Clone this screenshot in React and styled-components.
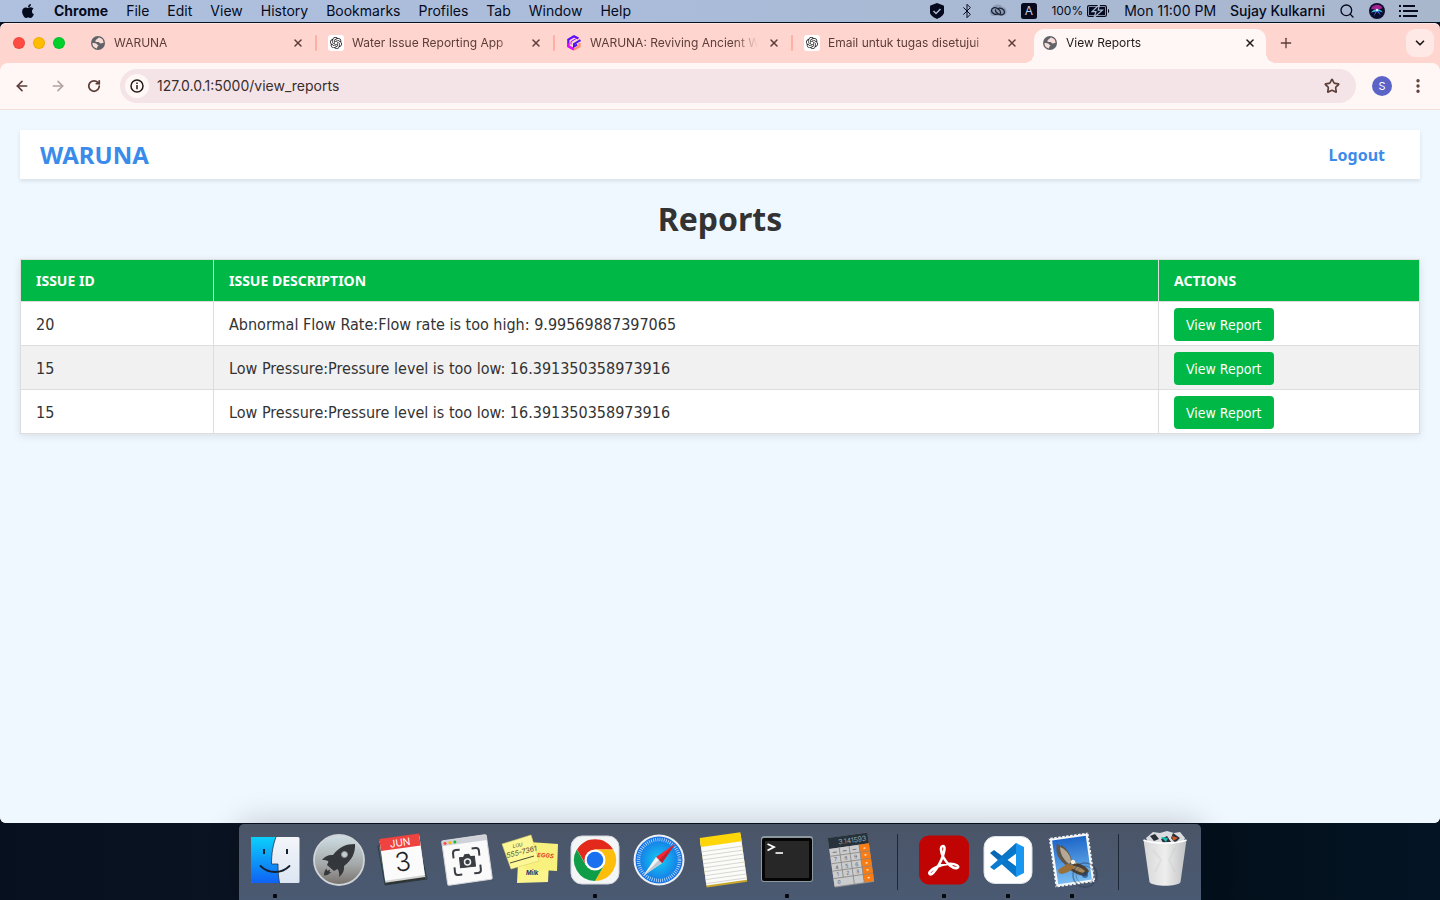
import React from "react";
import styled, { createGlobalStyle, css } from "styled-components";
import { FaApple } from "react-icons/fa";
import { SiOpenai } from "react-icons/si";
import {
  ArrowLeft,
  ArrowRight,
  Bluetooth,
  ChevronDown,
  EllipsisVertical,
  Plus,
  RotateCw,
  Search,
  Star,
  X,
} from "lucide-react";

const SYSTEM_FONT = `Inter, "Liberation Sans", sans-serif`;
const PAGE_FONT = `"DejaVu Sans Condensed", "DejaVu Sans", "Noto Sans", sans-serif`;
const HEADING_FONT = `"Noto Sans", "DejaVu Sans", sans-serif`;
const DRAWING_FONT = `Inter, sans-serif`;

const GlobalStyle = createGlobalStyle`
  *, *::before, *::after { box-sizing: border-box; }
  body { margin: 0; font-family: ${SYSTEM_FONT}; }
  button, input { font: inherit; }
`;

/* ---------- Desktop ---------- */

const Desktop = styled.div`
  min-height: 100vh;
  display: flex;
  flex-direction: column;
  background: linear-gradient(90deg, #07101f, #0a1322 15%, #03101c 85%, #041424);
  overflow: hidden;
`;

const MenuBar = styled.header`
  height: 22px;
  flex: none;
  margin-bottom: 1px;
  padding: 0 22px 0 20px;
  display: flex;
  align-items: center;
  justify-content: space-between;
  background: linear-gradient(90deg, #b0c1df, #a9bbd8 50%, #a9b7cd);
  color: #050a1c;
  font-size: 14px;
  line-height: 22px;
  white-space: nowrap;
`;

const MenuList = styled.nav`
  display: flex;
  align-items: center;
  gap: 18px;
`;

const MenuButton = styled.button`
  padding: 0;
  border: 0;
  background: none;
  color: inherit;
  display: flex;
  align-items: center;
  font-size: 14px;
  line-height: 22px;
  font-weight: ${(p) => p.$weight || 400};
`;

const StatusList = styled.div`
  display: flex;
  align-items: center;
  gap: 14px;
`;

const Battery = styled.span`
  display: flex;
  align-items: center;
  gap: 4px;
  font-size: 12px;
`;

/* ---------- Browser window ---------- */

const Window = styled.main`
  flex: 1;
  display: flex;
  flex-direction: column;
  margin-bottom: 1px;
  border-radius: 6px;
  overflow: hidden;
  background: #ffd5d0;
  box-shadow: inset 0 1px 0 #ffe6e2;
`;

const TabStrip = styled.div`
  height: 40px;
  flex: none;
  display: flex;
  align-items: center;
  padding-right: 6px;
`;

const TrafficLights = styled.div`
  width: 79px;
  flex: none;
  display: flex;
  gap: 8px;
  padding-left: 13px;
`;

const Light = styled.button`
  width: 12px;
  height: 12px;
  padding: 0;
  border: 1px solid rgba(0, 0, 0, 0.08);
  border-radius: 50%;
  background: ${(p) => p.$color};
`;

const Tab = styled.div`
  flex: 0 1 238px;
  min-width: 0;
  align-self: stretch;
  display: flex;
  align-items: center;
  gap: 1px;
  padding: 6px 0 0 3px;

  &::after {
    content: "";
    width: 2px;
    height: 16px;
    margin-bottom: 6px;
    border-radius: 1px;
    background: ${(p) => (p.$divider ? "#ffb0a6" : "transparent")};
  }
`;

const curve = css`
  content: "";
  position: absolute;
  bottom: 0;
  width: 10px;
  height: 10px;
`;

const TabBody = styled.div`
  position: relative;
  flex: 1;
  min-width: 0;
  height: 34px;
  display: flex;
  align-items: center;
  gap: 8px;
  padding: 0 8px 6px;
  border-radius: 10px 10px 0 0;
  color: #5c3d38;
  font-size: 12px;
  line-height: 16px;

  ${(p) =>
    p.$active &&
    css`
      background: #fff7f5;
      color: #1f1a19;
      &::before {
        ${curve}
        left: -10px;
        background: radial-gradient(circle at 0 0, transparent 10px, #fff7f5 10px);
      }
      &::after {
        ${curve}
        right: -10px;
        background: radial-gradient(circle at 100% 0, transparent 10px, #fff7f5 10px);
      }
    `}
`;

const TabIcon = styled.span`
  width: 16px;
  height: 16px;
  flex: none;
  display: flex;
  align-items: center;
  justify-content: center;
  border-radius: 3px;
  background: ${(p) => (p.$plate ? "#fff" : "transparent")};
`;

const TabTitle = styled.span`
  flex: 1;
  min-width: 0;
  white-space: nowrap;
  mask-image: linear-gradient(90deg, #000 calc(100% - 24px), transparent);
`;

const IconButton = styled.button`
  width: ${(p) => p.$size || 16}px;
  height: ${(p) => p.$size || 16}px;
  flex: none;
  display: flex;
  align-items: center;
  justify-content: center;
  padding: 0;
  border: 0;
  border-radius: ${(p) => p.$radius || 0}px;
  background: ${(p) => p.$fill || "none"};
  color: ${(p) => p.$color || "inherit"};
`;

const NewTab = styled.span`
  flex: 1;
  padding-left: 7px;
`;

const Toolbar = styled.div`
  height: 47px;
  flex: none;
  display: flex;
  align-items: center;
  padding: 0 8px;
  gap: 8px;
  background: #fff7f5;
  border-bottom: 1px solid #f3dedb;
  border-radius: 8px 8px 0 0;
`;

const Omnibox = styled.div`
  flex: 1;
  height: 34px;
  margin: 0 4px;
  padding: 0 14px 0 5px;
  display: flex;
  align-items: center;
  gap: 8px;
  border-radius: 17px;
  background: #f4e4e7;
`;

const UrlInput = styled.input`
  flex: 1;
  min-width: 0;
  padding: 0;
  border: 0;
  outline: 0;
  background: none;
  color: #3a2d2c;
  font-size: 14px;
  line-height: 20px;
`;

const Avatar = styled.button`
  width: 20px;
  height: 20px;
  margin: 0 4px;
  padding: 0;
  border: 0;
  border-radius: 50%;
  background: #5c63c6;
  color: #fff;
  font-size: 11px;
  line-height: 20px;
`;

/* ---------- Reports page ---------- */

const Page = styled.div`
  flex: 1;
  padding: 20px;
  background: #f0f8ff;
  color: #333;
  font-family: ${PAGE_FONT};
  font-size: 16px;
`;

const NavBar = styled.div`
  display: flex;
  align-items: center;
  justify-content: space-between;
  padding: 10px 20px;
  background: #fff;
  box-shadow: 0 2px 4px rgba(0, 0, 0, 0.1);
`;

const Brand = styled.div`
  color: #3b8beb;
  font-family: ${HEADING_FONT};
  font-size: 24px;
  line-height: 29px;
  font-weight: 700;
`;

const NavLink = styled.a`
  margin-right: 15px;
  color: #3b8beb;
  font-family: ${HEADING_FONT};
  font-size: 16px;
  line-height: 20px;
  font-weight: 700;
  text-decoration: none;
`;

const Title = styled.h1`
  margin: 20px 0;
  font-family: ${HEADING_FONT};
  font-size: 32px;
  line-height: 40px;
  font-weight: 700;
  text-align: center;
`;

const Table = styled.table`
  width: 100%;
  table-layout: fixed;
  border-collapse: collapse;
  background: #fff;
  box-shadow: 0 2px 8px rgba(0, 0, 0, 0.1);
`;

const Column = styled.col`
  width: ${(p) => p.$width};
`;

const HeadCell = styled.th`
  height: 42px;
  padding: 0 15px;
  border: 1px solid #ddd;
  background: #00b845;
  color: #fff;
  font-family: ${HEADING_FONT};
  font-size: 14px;
  line-height: 20px;
  font-weight: 700;
  text-align: left;
  text-transform: uppercase;
`;

const Row = styled.tr`
  &:nth-child(even) {
    background: #f1f1f1;
  }
`;

const Cell = styled.td`
  height: 44px;
  padding: 2px 15px 0;
  border: 1px solid #ddd;
  line-height: 20px;
`;

const ReportButton = styled.button`
  display: block;
  height: 33px;
  padding: 0 12px;
  border: 0;
  border-radius: 4px;
  background: #00b845;
  color: #fff;
  font-size: 14px;
  line-height: 20px;
  white-space: nowrap;
`;

/* ---------- Dock ---------- */

const Dock = styled.footer`
  position: relative;
  align-self: center;
  flex: none;
  display: flex;
  padding: 4px 4px 0;
  border-radius: 5px 5px 0 0;
  background: linear-gradient(#4b5568, #4a5a72);
  box-shadow: 0 0 32px rgba(0, 0, 0, 0.22);
`;

const DockItem = styled.button`
  width: 64px;
  height: 72px;
  padding: 0;
  border: 0;
  background: none;
  display: flex;
  flex-direction: column;
  align-items: center;
  gap: 2px;

  &::after {
    content: "";
    width: 4px;
    height: 4px;
    border-radius: 1px;
    background: ${(p) => (p.$running ? "#05070b" : "transparent")};
  }
`;

const DockDivider = styled.div`
  width: 1px;
  margin: 6px 14px 10px;
  background: #1c2738;
`;

/* ---------- Small icons ---------- */

const Globe = () => (
  <svg width="14" height="14" viewBox="0 0 14 14">
    <circle cx="7" cy="7" r="7" fill="#5f6368" />
    <path d="M8 1.4c-1.2.2-1 1.5-2 1.6-.9.2-.6 1.3-1.500 1.600C3.700 5 4.500 6 5.500 6h2c1 0 1 1.400 2 1.400 1.100 0 1.700-.6 3-.4A5.600 5.600 0 0 0 8 1.400z" fill="#f8dcd8" />
    <path d="M1.400 7C3 7 5.500 7 6 8.200c.3.800 1.400.5 1.400 1.400 0 .9-1.200.8-1.200 1.700 0 .5-.2.900-.2 1.200A5.600 5.600 0 0 1 1.400 7z" fill="#f8dcd8" />
  </svg>
);

const HexLogo = () => (
  <svg width="16" height="16" viewBox="0 0 16 16" fill="none">
    <path d="M12.500 3.400 8 1.300 2.300 4.600v6.600l5.700 3.200" stroke="#5a10ff" strokeWidth="2.200" />
    <path d="M2.300 8v3.200L8 14.500" stroke="#e40cff" strokeWidth="2.400" />
    <path d="m8 14.500 5.500-3.200V8" stroke="#ff8f70" strokeWidth="2.200" />
    <path d="M14.500 5.200 8 9v2.500l3.200-1.800" stroke="#4a12f5" strokeWidth="2" />
    <path d="M5 9.500V6.500l6-3.300" stroke="#a414fa" strokeWidth="1" />
  </svg>
);

const Favicon = ({ kind }) => {
  if (kind === "chat") {
    return (
      <TabIcon $plate>
        <SiOpenai size={12} color="#222" />
      </TabIcon>
    );
  }
  return <TabIcon>{kind === "hex" ? <HexLogo /> : <Globe />}</TabIcon>;
};

const ShieldIcon = () => (
  <svg width="16" height="16" viewBox="0 0 16 16">
    <path d="M8 0 14.500 2.400a1 1 0 0 1 .5 1v6.200c0 2.500-3.500 5-7 6.400-3.500-1.400-7-3.900-7-6.400V3.400a1 1 0 0 1 .5-1z" fill="#060a1c" />
    <path d="m4.500 8 2.500 2.500 4.500-4.500" stroke="#a9b9d4" strokeWidth="1.500" fill="none" />
  </svg>
);

const CloudIcon = () => (
  <svg width="18" height="14" viewBox="0 0 18 14" fill="none">
    <path d="M4 12a4 4 0 0 1-1-7.500A6 6 0 0 1 13.500 3 4.500 4.500 0 0 1 15 11.500z" fill="#8c9bb3" />
    <path d="M9.500 9.500C7 11.500 2.500 9.500 2.500 6.500 2.500 3.500 6 3 8.500 4.500s4 4 2.500 5.500" stroke="#1a2338" strokeWidth="1.300" />
    <path d="M8.500 5C11 3 15.500 5 15.500 8c0 3-3.500 3.500-6 2s-4-3.500-2.500-4.500" stroke="#1a2338" strokeWidth="1.300" />
  </svg>
);

const InputSourceIcon = () => (
  <svg width="16" height="16" viewBox="0 0 16 16">
    <rect width="16" height="16" rx="2.500" fill="#060a1c" />
    <text x="8" y="12" textAnchor="middle" fontSize="12" fontFamily={DRAWING_FONT} fill="#c5d0e2">A</text>
  </svg>
);

const BatteryIcon = () => (
  <svg width="23" height="12" viewBox="0 0 23 12" fill="none">
    <rect x=".6" y=".6" width="18.800" height="10.800" rx="1.500" stroke="#060a1c" strokeWidth="1.200" />
    <rect x="2" y="2" width="16" height="8" fill="#060a1c" />
    <path d="M12.500-.5 5 6.700h4l-2 5.800 8.500-7.400h-4.300z" fill="#060a1c" stroke="#aab9d2" strokeWidth="1.200" />
    <path d="M21 4v4c1.500-.4 1.500-3.600 0-4z" fill="#060a1c" />
  </svg>
);

const SiriIcon = () => (
  <svg width="16" height="16" viewBox="0 0 16 16">
    <circle cx="8" cy="8" r="8" fill="#0c0d2c" />
    <path d="M2 6a6.300 6.300 0 0 1 11.500-1L9 7z" fill="#a3228f" />
    <path d="M2 9.500C4 7 6 6 8 6.500c2.500-.5 4 .5 6 3L9.500 8z" fill="#3ac4e8" />
    <path d="m4.500 13.500 3.500-8 4 7-4-4z" fill="#3f7df0" />
    <circle cx="8" cy="7" r="1.200" fill="#e6f5ff" />
  </svg>
);

const ListIcon = () => (
  <svg width="19" height="12" viewBox="0 0 19 12" fill="#060a1c">
    <path d="M0 0h2v2H0zM4 0h12v2H4zM0 5h2v2H0zM4 5h15v2H4zM0 10h2v2H0zM4 10h14v2H4z" />
  </svg>
);

const InfoIcon = () => (
  <svg width="14" height="14" viewBox="0 0 14 14" fill="none">
    <circle cx="7" cy="7" r="6" stroke="#1f1a19" strokeWidth="1.500" />
    <path d="M7 6v4.200M7 3.500v1.500" stroke="#1f1a19" strokeWidth="1.500" />
  </svg>
);

/* ---------- Dock artwork (64 x 64) ---------- */

const Art = ({ children }) => (
  <svg width="64" height="64" viewBox="0 0 64 64" fill="none">{children}</svg>
);

const FinderArt = () => (
  <Art>
    <defs>
      <linearGradient id="fl" x2="0" y2="1"><stop stopColor="#0bd0fb" /><stop offset="1" stopColor="#0f62f5" /></linearGradient>
      <linearGradient id="fr" x2="0" y2="1"><stop stopColor="#f3f5f9" /><stop offset="1" stopColor="#dce6f3" /></linearGradient>
    </defs>
    <rect x="8" y="9" width="48.500" height="46" rx="1.500" fill="url(#fr)" />
    <path d="M9 9h24c-3 8-4.500 16-4.500 27H35c0 7 .4 13 1.500 19H9a1 1 0 0 1-1-1V10a1 1 0 0 1 1-1z" fill="url(#fl)" />
    <path d="M33 9c-3 8-4.500 16-4.500 27H35c0 7 .4 13 1.500 19" stroke="#1c3550" strokeWidth=".8" />
    <path d="M21 21v5M44 21v5" stroke="#15202e" strokeWidth="2" />
    <path d="M17.500 38c8 8 21 8 29 0" stroke="#15202e" strokeWidth="1.800" strokeLinecap="round" />
  </Art>
);

const LaunchpadArt = () => (
  <Art>
    <defs>
      <linearGradient id="lp" x2="0" y2="1"><stop stopColor="#cfdfe4" /><stop offset=".6" stopColor="#a3a7a8" /><stop offset="1" stopColor="#77706b" /></linearGradient>
    </defs>
    <circle cx="32" cy="32" r="25" fill="url(#lp)" stroke="#d0d4d8" strokeWidth="1.800" />
    <path d="M48 16c-9 0-16 3-22 11-4-.5-8 1-11 5 3 0 5 .4 6.500 1.500L20 37l7 6 3.500-2c1.500 2 2 4.500 1.500 8 4-3 5.500-7 5-11C45 32 48.500 25 48 16z" fill="#34373b" />
    <circle cx="37.500" cy="26.500" r="3" fill="#c3cdd1" stroke="#8d9598" />
    <path d="M19.500 40.500c-2 2-2.500 4-2.500 7 3 0 5-1 7.500-3.500l-2 .2.500-2.400-3 1z" fill="#34373b" />
  </Art>
);

const CalendarArt = () => (
  <Art>
    <path d="m7 18 40-6 9 39-42 6z" fill="#50656b" stroke="#293c43" />
    <g transform="rotate(-8 32 32)">
      <rect x="11.500" y="10" width="40" height="44" fill="#2f3432" />
      <rect x="11.500" y="10" width="40" height="42" fill="#d2d3d3" />
      <rect x="11.500" y="10" width="40" height="40" fill="#fbfbfb" />
      <rect x="11.500" y="8" width="40" height="12" fill="#ef4340" />
      <text x="31.500" y="18" fontSize="10" fontFamily={DRAWING_FONT} fill="#fff" textAnchor="middle">JUN</text>
      <text x="31.500" y="43" fontSize="26" fontWeight="300" fontFamily={DRAWING_FONT} fill="#222" textAnchor="middle">3</text>
    </g>
  </Art>
);

const ScreenshotArt = () => (
  <Art>
    <g transform="rotate(-8 32 32)">
      <rect x="9.500" y="9.500" width="45" height="45" rx="1.500" fill="#fafafa" stroke="#d4d6da" />
      <path d="M9.500 10h45v5h-45z" fill="#cfd2d8" />
      <circle cx="12.500" cy="12.500" r="1.500" fill="#ff4b41" />
      <circle cx="17.500" cy="12.500" r="1.500" fill="#ffb400" />
      <circle cx="22.500" cy="12.500" r="1.500" fill="#14bd35" />
    </g>
    <g transform="rotate(-6 32 34)" stroke="#3a3d42" strokeWidth="2">
      <path d="M19 29v-5q0-3 3-3h4M38 21h4q3 0 3 3v5M45 38v5q0 3-3 3h-4M26 46h-4q-3 0-3-3v-5" />
      <path d="M25 29h4l1.500-2.500h4L36 29h4v10H25z" fill="#3a3d42" strokeWidth="1" />
      <circle cx="32.500" cy="34" r="3" stroke="#f1f1f1" strokeWidth="1.500" />
    </g>
  </Art>
);

const StickiesArt = () => (
  <Art>
    <path d="m19 35 31-1-1 20-31 1z" fill="#fbf58c" />
    <path d="M30 14 59 16l-1 27-33-2z" fill="#f9f17d" />
    <path d="m3 16 29-9 8 26-28 8z" fill="#fdf795" stroke="#d9d071" strokeWidth=".6" />
    <g fontFamily={DRAWING_FONT} fontStyle="italic">
      <text x="14" y="20" fontSize="5" fill="#4b4a37" transform="rotate(-12 14 20)">LOU</text>
      <text x="8" y="30" fontSize="7" fill="#4b4a37" transform="rotate(-14 8 30)">555-7361</text>
      <text x="38" y="29" fontSize="6" fontWeight="700" fill="#e0411e" transform="rotate(4 38 29)">EGGS</text>
      <text x="27" y="47" fontSize="6" fontWeight="700" fill="#23386d">Milk</text>
    </g>
    <path d="m11 35 24-7" stroke="#4b4a37" />
  </Art>
);

const ChromeArt = () => (
  <Art>
    <rect x="8" y="8" width="48" height="48" rx="11" fill="#f4f5f6" stroke="#d3d7dc" />
    <path d="M14 21.500A21 21 0 0 1 50.200 21.500L32 21.500 23 37z" fill="#e3291b" />
    <path d="M50.200 21.500A21 21 0 0 1 32 53L41.100 37.200 32 21.500z" fill="#fdbd0b" />
    <path d="M32 53A21 21 0 0 1 13.800 21.500L22.900 37.200 41.100 37.200z" fill="#109d47" />
    <circle cx="32" cy="32" r="10.500" fill="#fff" />
    <circle cx="32" cy="32" r="8.300" fill="#1a70ee" />
  </Art>
);

const SafariArt = () => (
  <Art>
    <defs>
      <radialGradient id="sf"><stop stopColor="#14cdf5" /><stop offset="1" stopColor="#1670e4" /></radialGradient>
    </defs>
    <circle cx="32" cy="32" r="25.500" fill="#edf1f5" />
    <circle cx="32" cy="32" r="23.500" fill="url(#sf)" />
    <circle cx="32" cy="32" r="20.500" stroke="#fff" strokeWidth="3.500" strokeDasharray=".7 1.447" opacity=".8" />
    <path d="m48 16-13 19-6-6z" fill="#f32735" />
    <path d="m16 48 13-19 6 6z" fill="#f2f3f5" />
    <path d="m16 48 19-13-3-3z" fill="#c2c8cd" />
    <path d="m48 16-13 19-3-3z" fill="#c11f2b" />
  </Art>
);

const NotesArt = () => (
  <Art>
    <g transform="rotate(-8 32 32)">
      <rect x="12" y="9" width="41" height="48" fill="#c7a62c" />
      <rect x="12" y="9" width="41" height="46" fill="#fbfbf8" />
      <rect x="12" y="7" width="41" height="9" fill="#ffd60a" />
      <path d="M12 21h41M12 25h41M12 29h41M12 33h41M12 37h41M12 41h41M12 45h41M12 49h41M12 53h41" stroke="#cfd0cf" strokeWidth=".8" />
    </g>
  </Art>
);

const TerminalArt = () => (
  <Art>
    <rect x="6" y="8" width="52" height="46" rx="3" fill="#8d999e" />
    <rect x="7" y="10" width="50" height="43" rx="2" fill="#050505" />
    <rect x="10" y="13" width="44" height="37" fill="#272727" />
    <path d="m12.500 16 6.500 3-6.500 3.500" stroke="#fff" strokeWidth="1.800" />
    <path d="M20.500 25h7.500" stroke="#fff" strokeWidth="1.600" />
  </Art>
);

const CalculatorArt = () => (
  <Art>
    <g transform="rotate(-8 32 32)">
      <rect x="12" y="7" width="40" height="50" rx="1" fill="#8e8f91" />
      <rect x="12" y="7" width="40" height="11" fill="#27323b" />
      <rect x="12" y="18" width="30" height="38" fill="#cbcccd" />
      <rect x="42" y="18" width="10" height="38" fill="#fa7c12" />
      <path d="M12 25.500h40M12 33h40M12 40.500h40M12 48h40M22 18v30M32 18v38M42 18v38" stroke="#8a8784" strokeWidth=".8" />
      <text x="50" y="15" fontSize="7" fontWeight="300" textAnchor="end" fontFamily={DRAWING_FONT} fill="#b3c2c6">3.141593</text>
      <g fontFamily={DRAWING_FONT} fontSize="5" textAnchor="middle" fill="#555">
        {["7", "8", "9"].map((n, i) => <text key={n} x={17 + i * 10} y="31">{n}</text>)}
        {["4", "5", "6"].map((n, i) => <text key={n} x={17 + i * 10} y="39">{n}</text>)}
        {["1", "2", "3"].map((n, i) => <text key={n} x={17 + i * 10} y="46">{n}</text>)}
        <text x="17" y="54">0</text>
        <path d="M15 22h4M25 22h4M35 22h4" stroke="#777" />
        <path d="M46 22h2M46 29h2M46 37h2M46 44h2M46 52h2" stroke="#ffe2c2" strokeWidth="1.500" />
      </g>
    </g>
  </Art>
);

const AcrobatArt = () => (
  <Art>
    <rect x="7" y="7.500" width="50" height="49" rx="10" fill="#c00404" />
    <path d="M31 18c-3 0-2.500 6 .5 11.500 4 7 9.500 11.500 13.500 10.500 3.500-1-.5-5-9.500-4-8 1-15 4.500-17.500 7.500-2 2.500.5 4 3 1.500 3-3 6-8 8.500-13.500 2.500-6 4.500-13.500 1.500-13.500z" stroke="#fff" strokeWidth="2.600" strokeLinejoin="round" />
  </Art>
);

const CodeArt = () => (
  <Art>
    <rect x="8" y="8.500" width="48" height="47" rx="11" fill="#fff" stroke="#dce2e9" />
    <path d="m14 25 4-3 23 17v10z" fill="#0a68b4" />
    <path d="m14 39 27-24v10L18 42z" fill="#0b7bd0" />
    <path d="m40 15 8 4v26l-8 4z" fill="#1896f0" />
    <path d="m40 15-15 13.500 5 3.500 10-7.500zM40 49 25 35.500l5-3.500 10 7.500z" fill="#0877c9" />
  </Art>
);

const MailArt = () => (
  <Art>
    <defs>
      <linearGradient id="sky" x2="0" y2="1"><stop stopColor="#1d67c9" /><stop offset="1" stopColor="#79bdf2" /></linearGradient>
    </defs>
    <g transform="rotate(-8 32 32)">
      <rect x="12" y="7" width="40" height="50" fill="#f5f6f7" />
      <rect x="12" y="7" width="40" height="50" stroke="#4b586d" strokeWidth="2" strokeDasharray="1.500 2.500" />
      <rect x="15" y="10" width="34" height="44" fill="url(#sky)" />
    </g>
    <path d="M17 15c-1 5-1 9 1 13s5 7 9 10l5-2c0-8-5-16-11-19l-1 2-1-3-1 1z" fill="#5f564b" />
    <path d="M20 19c0 7 4 13 9 17l2-2c0-6-4-12-11-15z" fill="#b5a996" />
    <path d="m30 38 4-3c6 0 12 3 15 8l-3 5c-6 0-11-3-16-6z" fill="#4e4131" />
    <path d="M33 38c5 0 9 2 12 5l-2 2c-4-1-8-3-11-5z" fill="#a68b62" />
    <path d="m19 41 8-5 6 1 1 3-6 4-6 2c-3 0-5-3-3-5z" fill="#9a6f38" />
    <circle cx="33" cy="34" r="2.200" fill="#f7f0e1" />
    <path d="m35 34 2 1-2 1z" fill="#e8b63a" />
    <circle cx="45" cy="47" r="12" stroke="#26384f" strokeWidth="1.500" opacity=".45" />
    <circle cx="45" cy="47" r="9" stroke="#26384f" opacity=".35" />
    <circle cx="45" cy="47" r="3" fill="#1d4577" opacity=".65" />
  </Art>
);

const TrashArt = () => (
  <Art>
    <defs>
      <linearGradient id="tr"><stop stopColor="#d6d7d7" /><stop offset=".5" stopColor="#eeeeee" /><stop offset="1" stopColor="#bfc0c2" /></linearGradient>
    </defs>
    <path d="M13 10 20 4l7 1 7-2 7 2 6-1 5 6-3 7H16z" fill="#d9dde0" />
    <path d="m17 8 5-2 4 5-5 2zM28 11l6-3 4 6-8 1zM40 5l7 5-5 5-4-5z" fill="#2b3038" />
    <path d="m28 9 7 1-2 4z" fill="#18bfb5" />
    <path d="m39 8 6 2-5 3z" fill="#cd5b2a" />
    <path d="M10.500 12c8 4 35 4 43 0l-6 42c-2 5-28 5-31 0z" fill="url(#tr)" />
    <path d="M10.500 12c8 4 35 4 43 0" stroke="#fff" strokeWidth="1.500" />
    <path d="m20 22 8 10-6 12M42 20l-6 12 6 12" stroke="#cacaca" strokeWidth="2" opacity=".3" />
  </Art>
);

/* ---------- Data ---------- */

const MENUS = ["File", "Edit", "View", "History", "Bookmarks", "Profiles", "Tab", "Window", "Help"];

const TABS = [
  { title: "WARUNA", icon: "globe", divider: true },
  { title: "Water Issue Reporting App", icon: "chat", divider: true },
  { title: "WARUNA: Reviving Ancient W", icon: "hex", divider: true },
  { title: "Email untuk tugas disetujui", icon: "chat" },
  { title: "View Reports", icon: "globe", active: true },
];

const REPORTS = [
  { id: 20, text: "Abnormal Flow Rate:Flow rate is too high: 9.99569887397065" },
  { id: 15, text: "Low Pressure:Pressure level is too low: 16.391350358973916" },
  { id: 15, text: "Low Pressure:Pressure level is too low: 16.391350358973916" },
];

const DOCK_GROUPS = [
  [
    { name: "Finder", art: FinderArt, running: true },
    { name: "Launchpad", art: LaunchpadArt },
    { name: "Calendar", art: CalendarArt },
    { name: "Screenshot", art: ScreenshotArt },
    { name: "Stickies", art: StickiesArt },
    { name: "Chrome", art: ChromeArt, running: true },
    { name: "Safari", art: SafariArt },
    { name: "Notes", art: NotesArt },
    { name: "Terminal", art: TerminalArt, running: true },
    { name: "Calculator", art: CalculatorArt },
  ],
  [
    { name: "Acrobat", art: AcrobatArt, running: true },
    { name: "Code", art: CodeArt, running: true },
    { name: "Mail", art: MailArt, running: true },
  ],
  [{ name: "Trash", art: TrashArt }],
];

export default function App() {
  return (
    <Desktop>
      <GlobalStyle />
      <MenuBar>
        <MenuList aria-label="Menu bar">
          <MenuButton aria-label="Apple menu"><FaApple size={16} /></MenuButton>
          <MenuButton $weight={700}>Chrome</MenuButton>
          {MENUS.map((m) => <MenuButton key={m}>{m}</MenuButton>)}
        </MenuList>
        <StatusList>
          <ShieldIcon />
          <Bluetooth size={16} strokeWidth={1.5} />
          <CloudIcon />
          <InputSourceIcon />
          <Battery>100% <BatteryIcon /></Battery>
          <MenuButton>Mon 11:00 PM</MenuButton>
          <MenuButton $weight={500}>Sujay Kulkarni</MenuButton>
          <MenuButton aria-label="Search"><Search size={16} strokeWidth={2} /></MenuButton>
          <SiriIcon />
          <ListIcon />
        </StatusList>
      </MenuBar>

      <Window>
        <TabStrip>
          <TrafficLights>
            <Light $color="#ff4b43" aria-label="Close window" />
            <Light $color="#ffbc00" aria-label="Minimise window" />
            <Light $color="#00d02b" aria-label="Zoom window" />
          </TrafficLights>
          {TABS.map((t) => (
            <Tab key={t.title} $divider={t.divider}>
              <TabBody $active={t.active}>
                <Favicon kind={t.icon} />
                <TabTitle>{t.title}</TabTitle>
                <IconButton aria-label="Close tab"><X size={12} strokeWidth={3} /></IconButton>
              </TabBody>
            </Tab>
          ))}
          <NewTab>
            <IconButton $size={20} $color="#5c3d38" aria-label="New tab"><Plus size={16} strokeWidth={2} /></IconButton>
          </NewTab>
          <IconButton $size={28} $radius={9} $fill="#ffe9e6" $color="#1f1a19" aria-label="Search tabs">
            <ChevronDown size={14} strokeWidth={3} />
          </IconButton>
        </TabStrip>

        <Toolbar>
          <IconButton $size={28} $color="#5c3d38" aria-label="Back"><ArrowLeft size={16} strokeWidth={2.5} /></IconButton>
          <IconButton $size={28} $color="#b3a3a0" aria-label="Forward"><ArrowRight size={16} strokeWidth={2.5} /></IconButton>
          <IconButton $size={28} $color="#5c3d38" aria-label="Reload"><RotateCw size={14} strokeWidth={3} /></IconButton>
          <Omnibox>
            <IconButton $size={24} $radius={12} $fill="#fff7f5" aria-label="Site information"><InfoIcon /></IconButton>
            <UrlInput aria-label="Address" defaultValue="127.0.0.1:5000/view_reports" />
            <IconButton $size={20} $color="#5c3d38" aria-label="Bookmark"><Star size={16} strokeWidth={2.5} /></IconButton>
          </Omnibox>
          <Avatar aria-label="Profile">S</Avatar>
          <IconButton $size={28} $color="#5c3d38" aria-label="Browser menu"><EllipsisVertical size={18} strokeWidth={2.5} /></IconButton>
        </Toolbar>

        <Page>
          <NavBar>
            <Brand>WARUNA</Brand>
            <NavLink href="#logout">Logout</NavLink>
          </NavBar>
          <Title>Reports</Title>
          <Table>
            <colgroup>
              <Column $width="193px" />
              <Column $width="auto" />
              <Column $width="261px" />
            </colgroup>
            <thead>
              <tr>
                <HeadCell>Issue ID</HeadCell>
                <HeadCell>Issue Description</HeadCell>
                <HeadCell>Actions</HeadCell>
              </tr>
            </thead>
            <tbody>
              {REPORTS.map((r, i) => (
                <Row key={i}>
                  <Cell>{r.id}</Cell>
                  <Cell>{r.text}</Cell>
                  <Cell><ReportButton>View Report</ReportButton></Cell>
                </Row>
              ))}
            </tbody>
          </Table>
        </Page>
      </Window>

      <Dock>
        {DOCK_GROUPS.map((group, i) => (
          <React.Fragment key={i}>
            {i > 0 && <DockDivider />}
            {group.map(({ name, art: Icon, running }) => (
              <DockItem key={name} $running={running} aria-label={name}><Icon /></DockItem>
            ))}
          </React.Fragment>
        ))}
      </Dock>
    </Desktop>
  );
}
